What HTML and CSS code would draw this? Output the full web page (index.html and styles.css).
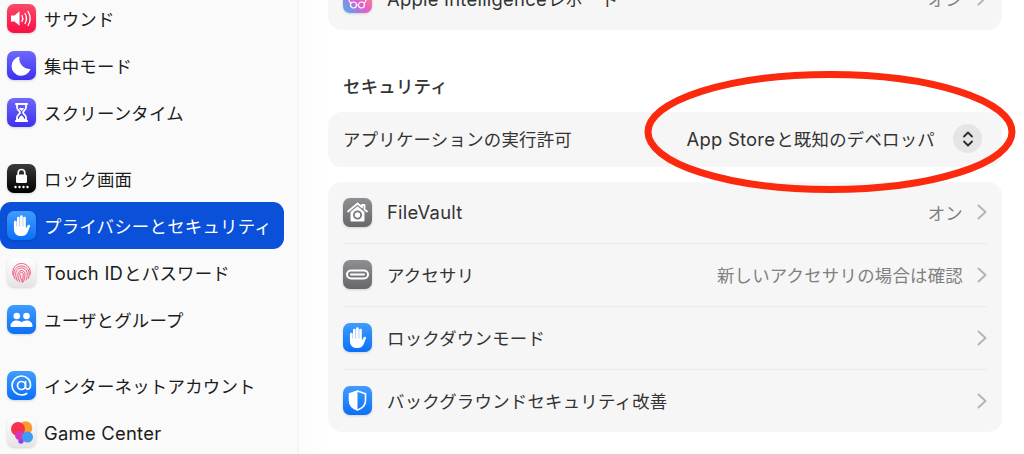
FILE: index.html
```html
<!DOCTYPE html>
<html lang="ja">

<head>
    <meta charset="UTF-8">
    <meta name="viewport" content="width=device-width, initial-scale=1.0">
    <title>プライバシーとセキュリティ</title>
    <link rel="stylesheet" href="styles.css">
</head>

<body>
    <svg class="defs" width="0" height="0">
        <defs>
            <linearGradient id="g-red" x1="0" y1="0" x2="0" y2="1"><stop offset="0" stop-color="#fb4a68"/><stop offset="1" stop-color="#f90f45"/></linearGradient>
            <linearGradient id="g-indigo" x1="0" y1="0" x2="0" y2="1"><stop offset="0" stop-color="#6f68fb"/><stop offset="1" stop-color="#3d30f0"/></linearGradient>
            <linearGradient id="g-black" x1="0" y1="0" x2="0" y2="1"><stop offset="0" stop-color="#3a3a3c"/><stop offset="1" stop-color="#000"/></linearGradient>
            <linearGradient id="g-blue" x1="0" y1="0" x2="0" y2="1"><stop offset="0" stop-color="#3f9cff"/><stop offset="1" stop-color="#0a70f8"/></linearGradient>
            <linearGradient id="g-gray" x1="0" y1="0" x2="0" y2="1"><stop offset="0" stop-color="#8e8e93"/><stop offset="1" stop-color="#66666b"/></linearGradient>
            <linearGradient id="g-light" x1="0" y1="0" x2="0" y2="1"><stop offset="0" stop-color="#ffffff"/><stop offset="1" stop-color="#e4e4e6"/></linearGradient>
            <linearGradient id="g-apple" x1="1" y1="0" x2="0" y2="1"><stop offset="0" stop-color="#f7a24c"/><stop offset="0.55" stop-color="#e65bd0"/><stop offset="0.95" stop-color="#3fb4f5"/></linearGradient>
            <symbol id="hand" viewBox="0 0 29 29">
                <path d="M8.300 11v6.600M11.300 7v9.600M14.400 5.500v11M17.500 7v9.600" stroke="#fff" stroke-width="2.700" stroke-linecap="round" fill="none"/>
                <path d="M7 15.500h11.800v2.200l2-3.400c.7-1.100 2.700-.4 2.200 1l-2.400 5.900c-.9 2.300-2.900 3.800-5.700 3.800h-1.500c-3.600 0-6.400-2.700-6.400-6.300z" fill="#fff"/>
            </symbol>
            <symbol id="chevron" viewBox="0 0 10 16">
                <path d="M1.500 1.500 8.500 8l-7 6.500" stroke="#b4b4b6" stroke-width="1.900" stroke-linecap="round" stroke-linejoin="round" fill="none"/>
            </symbol>
        </defs>
    </svg>

    <div class="window">
        <!-- サイドバー -->
        <nav class="sidebar">
            <div class="side-group">
                <div class="side-item">
                    <svg class="icon" viewBox="0 0 29 29"><rect width="29" height="29" rx="7" fill="url(#g-red)"/><path d="M4 11.500h3.500l5-4.200v14.400l-5-4.200H4z" fill="#fff"/><path d="M15 11.500c1 1.800 1 4.200 0 6M18 9.500c1.800 3 1.800 7 0 10M21 7.500c2.600 4.200 2.600 9.800 0 14" stroke="#fff" stroke-width="1.300" stroke-linecap="round" fill="none"/></svg>
                    <span>サウンド</span>
                </div>
                <div class="side-item">
                    <svg class="icon" viewBox="0 0 29 29"><rect width="29" height="29" rx="7" fill="url(#g-indigo)"/><path d="M12.500 5.500a9.700 9.700 0 1 0 11 12.500A10.500 10.500 0 0 1 12.500 5.500z" fill="#fff"/></svg>
                    <span>集中モード</span>
                </div>
                <div class="side-item">
                    <svg class="icon" viewBox="0 0 29 29"><rect width="29" height="29" rx="7" fill="url(#g-indigo)"/><path d="M9 6h11M9 23h11" stroke="#fff" stroke-width="2.200" stroke-linecap="round"/><path d="M10 7v2.500c0 2.500 3 3.500 3 5s-3 2.500-3 5V22h9v-2.500c0-2.500-3-3.500-3-5s3-2.500 3-5V7" stroke="#fff" stroke-width="1.800" fill="none"/><path d="M11.500 21.500c.5-2.500 2-3.500 3-4 1 .5 2.500 1.500 3 4zM12 10h5c-.5 1.500-1.500 2-2.500 3-1-1-2-1.500-2.500-3z" fill="#fff"/></svg>
                    <span>スクリーンタイム</span>
                </div>
            </div>

            <div class="side-group">
                <div class="side-item">
                    <svg class="icon" viewBox="0 0 29 29"><rect width="29" height="29" rx="7" fill="url(#g-black)"/><path d="M11.200 11V8.800a3.300 3.300 0 0 1 6.600 0V11" stroke="#fff" stroke-width="1.700" fill="none"/><rect x="9" y="10.500" width="11" height="8.500" rx="1.500" fill="#fff"/><g fill="#fff"><circle cx="8.500" cy="23" r="1.200"/><circle cx="12.500" cy="23" r="1.200"/><circle cx="16.500" cy="23" r="1.200"/><circle cx="20.500" cy="23" r="1.200"/></g></svg>
                    <span>ロック画面</span>
                </div>
                <div class="side-item active">
                    <svg class="icon" viewBox="0 0 29 29"><rect width="29" height="29" rx="7" fill="url(#g-blue)"/><use href="#hand"/></svg>
                    <span>プライバシーとセキュリティ</span>
                </div>
                <div class="side-item">
                    <svg class="icon" viewBox="0 0 29 29"><rect width="29" height="29" rx="7" fill="url(#g-light)"/><g stroke="#f2577f" stroke-width="1" fill="none" stroke-linecap="round"><path d="M6 17c-1.500-6 2.500-11.500 8.500-11.500S24.500 11 23 17"/><path d="M8 21c-1.200-2-1.500-4-1-7 .7-3.500 4-6 7.500-6s7 2.500 7.500 6.500c.3 2 .2 4-.5 6"/><path d="M10.500 23c-1.500-3-2-5.500-1.700-8.500.4-2.500 2.800-4.500 5.700-4.500s5.300 2 5.700 5c.2 2.500-.2 5-1 7"/><path d="M13 24c-1.500-3-2.300-5.500-2-8.500.2-1.500 1.700-3 3.500-3s3.200 1.400 3.400 3.200c.2 2.800-.4 5.300-1.400 7.800"/><path d="M15.500 24.500c-1.500-3-2.200-5.800-2.800-8.800-.2-1 .8-1.500 1.800-1.500s1.600.7 1.700 1.800c.2 2.500-.1 4.500-.7 6.500"/></g></svg>
                    <span><span class="latin">Touch ID</span>とパスワード</span>
                </div>
                <div class="side-item">
                    <svg class="icon" viewBox="0 0 29 29"><rect width="29" height="29" rx="7" fill="url(#g-blue)"/><g fill="#fff"><circle cx="9.800" cy="11" r="3.300"/><circle cx="19.500" cy="11" r="3.300"/><path d="M3.500 21c0-3.500 2.800-5.500 6.300-5.500 2 0 3.700.7 4.800 1.900 1.100-1.200 2.900-1.900 4.900-1.900 3.500 0 6 2 6 5.500 0 .7-.5 1-1 1H4.500c-.6 0-1-.3-1-1z"/></g></svg>
                    <span>ユーザとグループ</span>
                </div>
            </div>

            <div class="side-group">
                <div class="side-item">
                    <svg class="icon" viewBox="0 0 29 29"><rect width="29" height="29" rx="7" fill="url(#g-blue)"/><g stroke="#fff" stroke-width="1.700" fill="none" stroke-linecap="round"><circle cx="14.500" cy="14.500" r="4"/><path d="M18.500 10.500v5.500c0 3 4.800 3 5-1.500.2-5.500-4-9.500-9-9.500a9.500 9.500 0 0 0 0 19c2 0 3.800-.5 5.200-1.500"/></g></svg>
                    <span>インターネットアカウント</span>
                </div>
                <div class="side-item">
                    <svg class="icon" viewBox="0 0 29 29"><rect width="29" height="29" rx="7" fill="url(#g-light)"/><circle cx="14" cy="23" r="2.700" fill="#8a3ff0"/><circle cx="18.500" cy="10" r="6.800" fill="#fb9a2d"/><circle cx="11" cy="11" r="7" fill="#f5334f"/><circle cx="12.500" cy="17.500" r="4.500" fill="#d436b8"/><circle cx="20.500" cy="19" r="5.500" fill="#3f9cf2"/></svg>
                    <span class="latin-text">Game Center</span>
                </div>
            </div>
        </nav>

        <!-- 設定の内容 -->
        <main class="content">
            <section class="card">
                <div class="row">
                    <svg class="icon" viewBox="0 0 29 29"><rect width="29" height="29" rx="7" fill="url(#g-apple)"/><g stroke="#fff" stroke-width="1.200" fill="none"><circle cx="10.500" cy="21" r="3"/><circle cx="18.500" cy="21" r="3"/><path d="M13.500 21h2M7 12c-2 3-1 6 1 7M22 12c2 3 1 6-1 7"/></g></svg>
                    <span class="label"><span class="latin">Apple Intelligence</span>レポート</span>
                    <span class="value">オン</span>
                    <svg class="chevron"><use href="#chevron"/></svg>
                </div>
            </section>

            <h2 class="section-title">セキュリティ</h2>

            <section class="card">
                <div class="row row-select">
                    <span class="label">アプリケーションの実行許可</span>
                    <span class="select-value"><span class="latin">App Store</span>と既知のデベロッパ</span>
                    <span class="stepper">
                        <svg width="12" height="18" viewBox="0 0 12 18"><path d="M2 6.500 6 2.500l4 4M2 11.500l4 4 4-4" stroke="#2b2b2b" stroke-width="1.800" stroke-linecap="round" stroke-linejoin="round" fill="none"/></svg>
                    </span>
                </div>
            </section>

            <section class="card card-list">
                <div class="row">
                    <svg class="icon" viewBox="0 0 29 29"><rect width="29" height="29" rx="7" fill="url(#g-gray)"/><path d="M5 13.500 14.500 5.500 19 9.300V7h2.500v4.400l2.500 2.100" stroke="#fff" stroke-width="1.800" stroke-linejoin="round" stroke-linecap="round" fill="none"/><path d="M7.500 14 14.500 8.200 21.500 14v8.500a1 1 0 0 1-1 1h-12a1 1 0 0 1-1-1z" fill="#fff"/><circle cx="14.500" cy="17" r="3.600" fill="none" stroke="#77777c" stroke-width="1.800"/></svg>
                    <span class="label latin-text">FileVault</span>
                    <span class="value">オン</span>
                    <svg class="chevron"><use href="#chevron"/></svg>
                </div>
                <div class="row">
                    <svg class="icon" viewBox="0 0 29 29"><rect width="29" height="29" rx="7" fill="url(#g-gray)"/><rect x="4" y="10.500" width="21" height="8" rx="4" fill="none" stroke="#fff" stroke-width="2"/><rect x="7" y="13.500" width="15" height="2" rx="1" fill="#fff"/></svg>
                    <span class="label">アクセサリ</span>
                    <span class="value">新しいアクセサリの場合は確認</span>
                    <svg class="chevron"><use href="#chevron"/></svg>
                </div>
                <div class="row">
                    <svg class="icon" viewBox="0 0 29 29"><rect width="29" height="29" rx="7" fill="url(#g-blue)"/><use href="#hand"/></svg>
                    <span class="label">ロックダウンモード</span>
                    <svg class="chevron"><use href="#chevron"/></svg>
                </div>
                <div class="row">
                    <svg class="icon" viewBox="0 0 29 29"><rect width="29" height="29" rx="7" fill="url(#g-blue)"/><path d="M14.500 5 22.500 7.800v6.700c0 4.600-3.300 7.800-8 9.500-4.700-1.700-8-4.900-8-9.500V7.800z" fill="none" stroke="#fff" stroke-width="1.600"/><path d="M14.500 5 6.500 7.800v6.700c0 4.600 3.300 7.800 8 9.500z" fill="#fff"/></svg>
                    <span class="label">バックグラウンドセキュリティ改善</span>
                    <svg class="chevron"><use href="#chevron"/></svg>
                </div>
            </section>
        </main>

        <!-- 赤い丸の書き込み -->
        <svg class="annotation" width="384" height="134" viewBox="0 0 384 134">
            <ellipse cx="192" cy="67" rx="182" ry="57.500" fill="none" stroke="#fb2a0e" stroke-width="7"/>
        </svg>
    </div>
</body>

</html>
```

FILE: styles.css
```css
* {
    box-sizing: border-box;
}

body {
    margin: 0;
    background-color: #fff;
    font-family: Inter, "Noto Sans CJK JP", sans-serif;
    font-size: 17.4px;
    letter-spacing: 0.25px;
    overflow: hidden;
}

.defs {
    display: block;
}

.window {
    position: relative;
    display: flex;
    width: 1024px;
    height: 454px;
    overflow: hidden;
}

/* 英字だけ少し大きい */
.latin {
    margin-right: 1px;
    font-size: 18.4px;
}

.latin-text {
    font-size: 18.4px;
}

/* サイドバー */
.sidebar {
    flex: 0 0 299px;
    display: flex;
    flex-direction: column;
    gap: 19px;
    margin-top: -5px;
    padding-right: 14px;
    background-color: #fafafa;
    border-right: 1px solid #f1f1f1;
    color: #1c1c1c;
}

.side-item {
    display: flex;
    align-items: center;
    gap: 8px;
    height: 47px;
    padding-left: 7px;
    border-radius: 11px;
    white-space: nowrap;
}

.side-item.active {
    background-color: #0a50d8;
    color: #fff;
}

.icon {
    flex: none;
    width: 29px;
    height: 29px;
    filter: drop-shadow(0 1px 1px rgba(0, 0, 0, 0.15));
}

/* 内容 */
.content {
    flex: 1;
    margin-top: -33px;
    padding: 0 22px 0 29px;
    background: linear-gradient(90deg, #fcfcfc, #fff 30px);
    color: #333;
}

.card {
    background-color: #f6f6f6;
    border-radius: 14px;
}

.card-list {
    margin-top: 15px;
}

.card-list .row + .row::before {
    content: "";
    position: absolute;
    top: -1px;
    left: 15px;
    right: 15px;
    height: 1px;
    background-color: #ebebeb;
}

.card-list .row {
    height: 63px;
    padding-bottom: 1px;
}

.card-list .row:first-child {
    height: 62px;
}

.card-list .row:last-child {
    height: 62px;
    padding-bottom: 0;
}

.section-title {
    margin: 44px 0 12px 15px;
    font-size: 17.4px;
    line-height: 26px;
    font-weight: 500;
    color: #333;
}

.row {
    position: relative;
    display: flex;
    align-items: center;
    gap: 15px;
    height: 62.700px;
    padding: 0 15px;
}

.row-select {
    height: 55px;
    padding-right: 20px;
    padding-bottom: 1px;
}

.label {
    flex: 1;
    white-space: nowrap;
}

.value {
    color: #808080;
    white-space: nowrap;
}

.chevron {
    flex: none;
    width: 10px;
    height: 16px;
    margin-left: -1px;
}

.select-value {
    white-space: nowrap;
}

.stepper {
    display: flex;
    align-items: center;
    justify-content: center;
    width: 29px;
    height: 29px;
    margin-left: 3px;
    border-radius: 50%;
    background-color: #e5e5e5;
}

/* 注釈 */
.annotation {
    position: absolute;
    left: 638px;
    top: 65px;
}
```
